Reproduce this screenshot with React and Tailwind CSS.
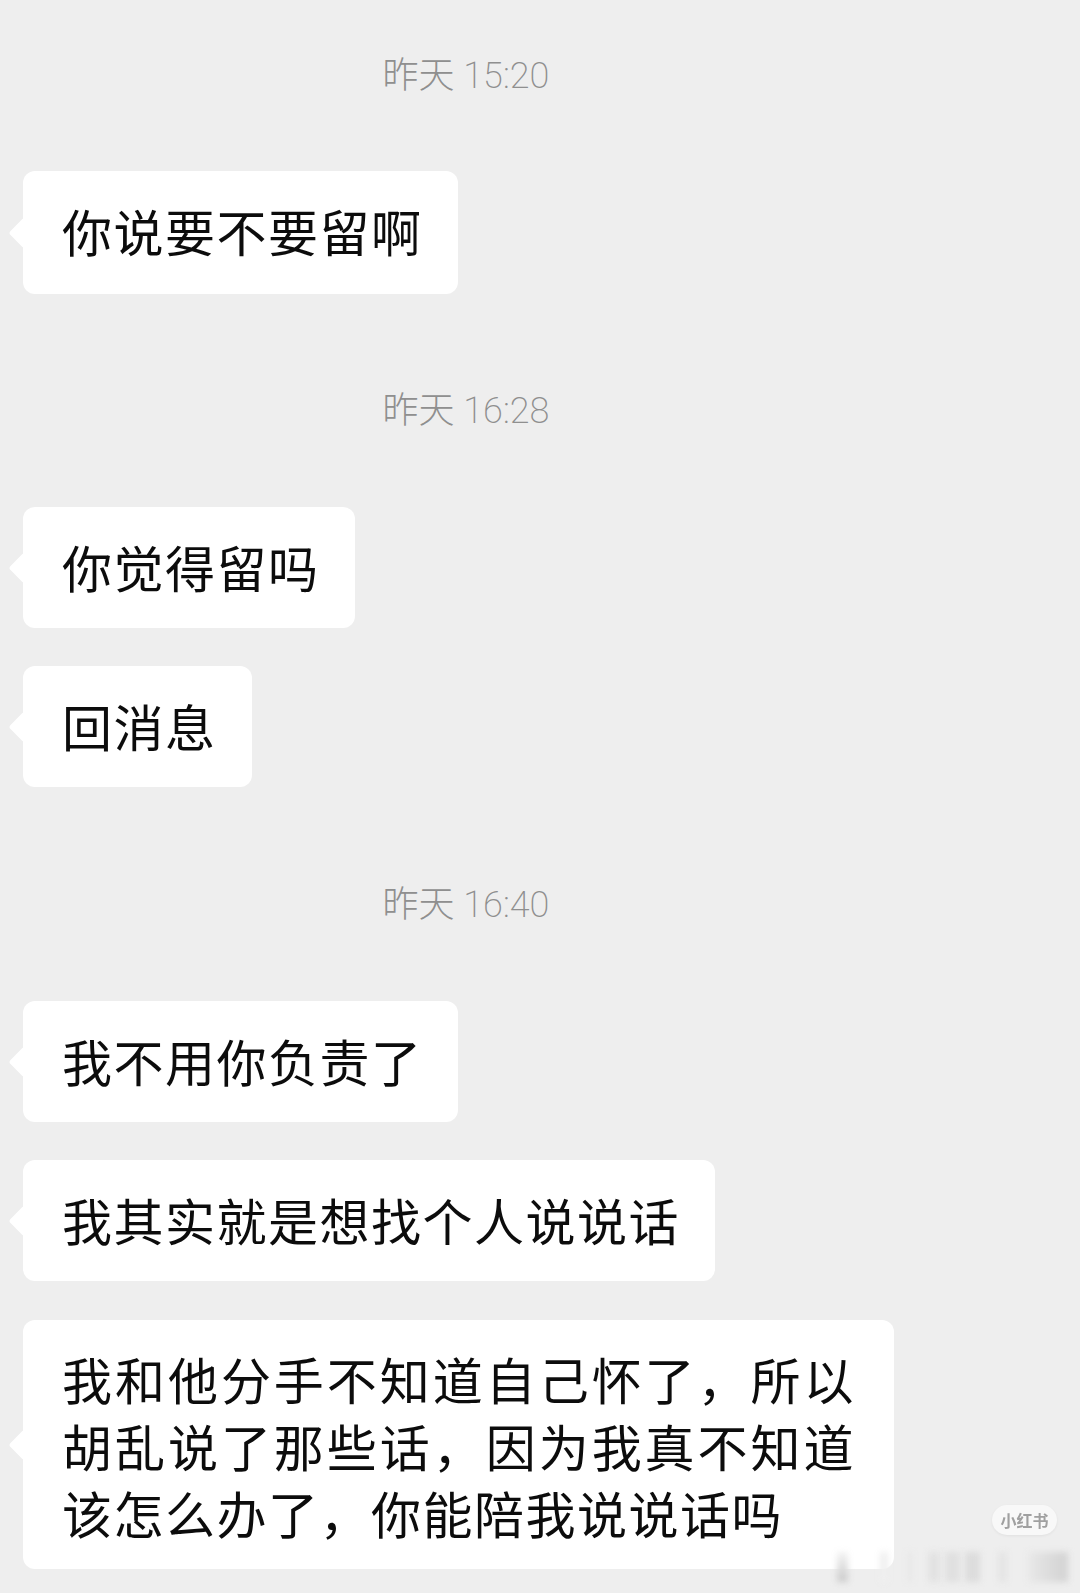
const F = '"Noto Sans CJK SC", sans-serif';

function Time({ children, className }) {
  return (
    <div className={`flex justify-center text-[36px] leading-[44px] font-extralight text-[#8f8f8f] pr-[148px] font-[Roboto,'Noto_Sans_CJK_SC',sans-serif] ${className}`}>
      {children}
    </div>
  );
}

function Bubble({ children, className = "" }) {
  return (
    <div className={`relative w-fit ml-[23px] bg-white rounded-[12px] pl-[39px] pr-[35px] pt-[26px] pb-[28px] text-[50px] leading-[67px] tracking-[1.5px] text-[#0c0c0c] ${className}`}>
      <div className="absolute left-[-10px] top-1/2 -mt-[11px] w-[22px] h-[22px] rotate-45 rounded-[3px] bg-white" />
      <div className="relative">{children}</div>
    </div>
  );
}

function Bar({ className }) {
  return <div className={`h-[30px] blur-[3px] ${className}`} />;
}

export default function App() {
  return (
    <div className="relative w-[1080px] h-[1593px] overflow-hidden bg-[#eeeeee]" style={{ fontFamily: F }}>
      <Time className="pt-[54px]">昨天 15:20</Time>
      <Bubble className="mt-[73px] !pb-[30px]">你说要不要留啊</Bubble>
      <Time className="mt-[95px]">昨天 16:28</Time>
      <Bubble className="mt-[74px]">你觉得留吗</Bubble>
      <Bubble className="mt-[38px]">回消息</Bubble>
      <Time className="mt-[96px]">昨天 16:40</Time>
      <Bubble className="mt-[74px]">我不用你负责了</Bubble>
      <Bubble className="mt-[38px]">我其实就是想找个人说说话</Bubble>
      <Bubble className="mt-[39px] !pt-[25px] !pb-[23px] !pr-[39px] !w-[871px] text-justify">
        我和他分手不知道自己怀了，所以胡乱说了那些话，因为我真不知道该怎么办了，你能陪我说说话吗
      </Bubble>
      <div className="absolute left-[992px] top-[1505px] w-[65px] h-[30px] rounded-[15px] bg-[#f8f8f8] shadow-[0_1px_3px_rgba(0,0,0,0.06)] flex items-center justify-center text-[16px] font-bold leading-none text-[#a0a0a0]">
        <span className="blur-[0.7px]">小红书</span>
      </div>
      <div className="absolute left-[837px] top-[1552px] flex">
        <Bar className="w-[11px] bg-gradient-to-b from-[#f4f4f4] to-[#c9c9c9]" />
        <Bar className="w-[8px] ml-[32px] bg-[#efefef]" />
        <Bar className="w-[6px] ml-[19px] bg-[#e8e8e8]" />
        <Bar className="w-[12px] ml-[15px] bg-[#e2e2e2]" />
        <Bar className="w-[15px] ml-[5px] bg-[#e0e0e0]" />
        <Bar className="w-[15px] ml-[5px] bg-[#dcdcdc]" />
        <Bar className="w-[9px] ml-[18px] bg-[#e4e4e4]" />
        <Bar className="w-[40px] ml-[21px] bg-gradient-to-r from-[#e8e8e8] to-[#d2d2d2]" />
      </div>
    </div>
  );
}
